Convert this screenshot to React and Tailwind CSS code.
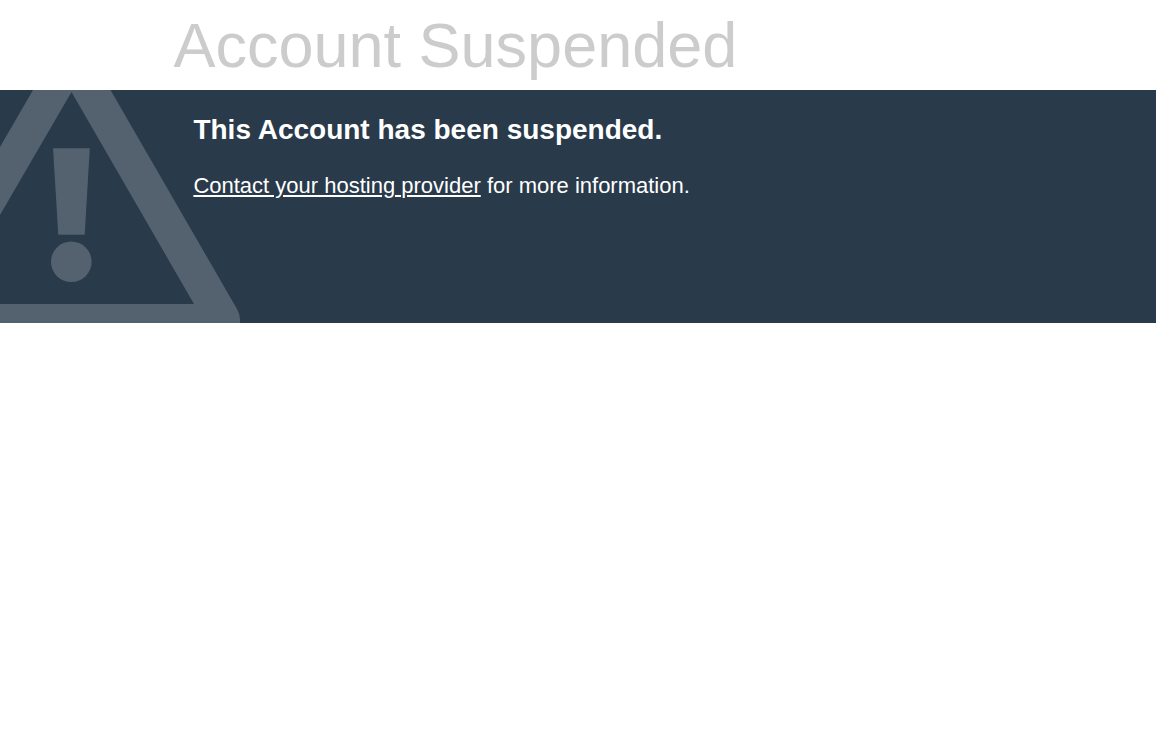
function WarningSign() {
  return (
    <svg
      aria-hidden="true"
      viewBox="0 0 240 233"
      className="absolute top-0 left-0 h-[233px] w-[240px] fill-[#54626f]"
    >
      <path
        fillRule="evenodd"
        d="M33 0H110.500L237 219Q240 224.500 240 229V233H0V214H194L71.500 2L0 125V57Z"
      />
      <path d="M53 58.300H89.800L84.700 144.700H58.300Z" />
      <circle cx="71.300" cy="171.800" r="20.300" />
    </svg>
  );
}

export default function App() {
  return (
    <div className="min-h-screen bg-white font-['Liberation_Sans',Arial,sans-serif]">
      <header className="px-[15%] text-[#cccccc]">
        <h1 className="text-[63px] leading-[90px]">Account Suspended</h1>
      </header>
      <main className="relative min-h-[233px] bg-[#293a4a] px-[15%] text-white">
        <WarningSign />
        <div className="relative px-5 pt-5">
          <h2 className="text-[28px] leading-10 font-bold">This Account has been suspended.</h2>
          <p className="mt-5 text-[22px] leading-8">
            <a href="#contact" className="underline">Contact your hosting provider</a> for more information.
          </p>
        </div>
      </main>
    </div>
  );
}
